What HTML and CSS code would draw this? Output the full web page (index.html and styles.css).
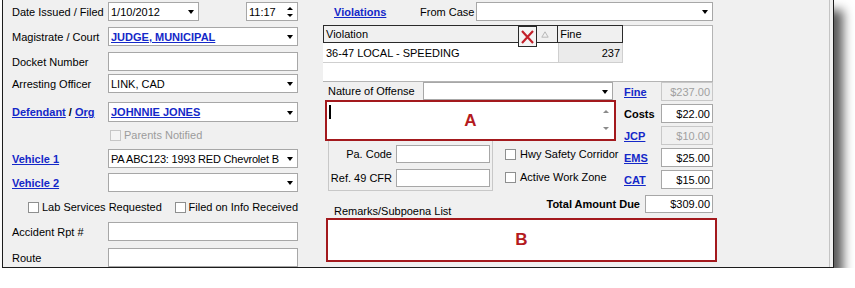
FILE: index.html
```html
<!DOCTYPE html>
<html lang="en">
<head>
    <meta charset="UTF-8">
    <meta name="viewport" content="width=device-width, initial-scale=1.0">
    <title>Citation Entry</title>
    <link rel="stylesheet" href="styles.css">
</head>
<body>

    <div class="window">

        <!-- left column: case / defendant fields -->
        <div class="left-col">
            <div class="row">
                <span class="lbl">Date Issued / Filed</span>
                <div class="field combo date-box"><span class="val">1/10/2012</span><span class="arrow"></span></div>
                <div class="field time-box"><span class="val">11:17</span><span class="spinner"><span class="up"></span><span class="down"></span></span></div>
            </div>
            <div class="row">
                <span class="lbl">Magistrate / Court</span>
                <div class="field combo"><span class="val link">JUDGE, MUNICIPAL</span><span class="arrow"></span></div>
            </div>
            <div class="row">
                <span class="lbl">Docket Number</span>
                <div class="field"></div>
            </div>
            <div class="row">
                <span class="lbl">Arresting Officer</span>
                <div class="field combo"><span class="val">LINK, CAD</span><span class="arrow"></span></div>
            </div>
            <div class="row tall">
                <span class="lbl"><span class="link">Defendant</span> <b>/</b> <span class="link">Org</span></span>
                <div class="field combo"><span class="val link">JOHNNIE JONES</span><span class="arrow"></span></div>
            </div>
            <div class="row check-row parents">
                <span class="cb disabled"></span><span class="muted">Parents Notified</span>
            </div>
            <div class="row">
                <span class="lbl"><span class="link">Vehicle 1</span></span>
                <div class="field combo"><span class="val tight">PA ABC123: 1993 RED Chevrolet B</span><span class="arrow"></span></div>
            </div>
            <div class="row">
                <span class="lbl"><span class="link">Vehicle 2</span></span>
                <div class="field combo"><span class="val"></span><span class="arrow"></span></div>
            </div>
            <div class="row check-row lab">
                <span class="check lab-check"><span class="cb"></span>Lab Services Requested</span>
                <span class="check"><span class="cb"></span>Filed on Info Received</span>
            </div>
            <div class="row">
                <span class="lbl">Accident Rpt #</span>
                <div class="field"></div>
            </div>
            <div class="row">
                <span class="lbl">Route</span>
                <div class="field"></div>
            </div>
        </div>

        <!-- middle column: violations and amounts -->
        <div class="mid-col">
            <div class="mid-head">
                <span class="viol-link"><span class="link">Violations</span></span>
                <span class="from-lbl">From Case</span>
                <div class="field combo from-box"><span class="val"></span><span class="arrow"></span></div>
            </div>

            <div class="vgrid">
                <div class="vrow vhead">
                    <div class="vc vc-name">
                        <span>Violation</span>
                        <span class="xbox">
                            <svg width="17" height="18" viewBox="0 0 17 18"><path d="M3 3 L14 15 M14 3 L3 15" stroke="#c3202a" stroke-width="2.2" fill="none"/></svg>
                        </span>
                        <svg class="sort" width="8" height="7" viewBox="0 0 8 7"><path d="M4 0.8 L7.2 6.2 L0.8 6.2 Z" stroke="#b8b8b8" fill="none"/></svg>
                    </div>
                    <div class="vc vc-fine">Fine</div>
                </div>
                <div class="vrow vdata">
                    <div class="vc vc-name">36-47 LOCAL - SPEEDING</div>
                    <div class="vc vc-fine">237</div>
                </div>
            </div>

            <div class="mid-body">
                <div class="main">
                    <div class="nature-row">
                        <span class="nature-lbl">Nature of Offense</span>
                        <div class="field combo nature-box"><span class="val"></span><span class="arrow"></span></div>
                    </div>

                    <div class="mark-box box-a">
                        <span class="caret"></span>
                        <span class="mark">A</span>
                        <span class="scroll"><span class="up"></span><span class="down"></span></span>
                    </div>

                    <div class="lower">
                        <div class="group">
                            <div class="code-row">
                                <span class="code-lbl">Pa. Code</span>
                                <div class="field code-box"></div>
                            </div>
                            <div class="code-row">
                                <span class="code-lbl">Ref. 49 CFR</span>
                                <div class="field code-box"></div>
                            </div>
                        </div>
                        <div class="zone-checks">
                            <span class="check"><span class="cb"></span>Hwy Safety Corridor</span>
                            <span class="check"><span class="cb"></span>Active Work Zone</span>
                        </div>
                    </div>
                </div>

                <div class="side">
                    <div class="amt-row"><span class="link">Fine</span><div class="field amt disabled">$237.00</div></div>
                    <div class="amt-row"><b>Costs</b><div class="field amt">$22.00</div></div>
                    <div class="amt-row"><span class="link">JCP</span><div class="field amt disabled">$10.00</div></div>
                    <div class="amt-row"><span class="link">EMS</span><div class="field amt">$25.00</div></div>
                    <div class="amt-row"><span class="link">CAT</span><div class="field amt">$15.00</div></div>
                </div>
            </div>

            <div class="mid-foot">
                <span class="remarks-lbl">Remarks/Subpoena List</span>
                <div class="total">
                    <b>Total Amount Due</b>
                    <div class="field total-box">$309.00</div>
                </div>
            </div>

            <div class="mark-box box-b">
                <span class="mark">B</span>
            </div>
        </div>

    </div>

</body>
</html>
```

FILE: styles.css
```css
body {
    margin: 0;
    background-color: #fff;
    font-family: "Liberation Sans", Arial, sans-serif;
    font-size: 11px;
    color: #000;
}

.window {
    display: flex;
    box-sizing: border-box;
    width: 832px;
    height: 268px;
    margin-left: 2px;
    padding-left: 9px;
    border: 1px solid #1c1c1c;
    border-top: none;
    background-color: #f0f0f0;
    overflow: hidden;
    box-shadow: inset -3px 0 0 #f0f0f0, inset -4px 0 0 #c4c4c4, 9px 10px 10px rgba(0, 0, 0, 0.65);
}

.link {
    color: #1428c8;
    font-weight: bold;
    text-decoration: underline;
}

.muted {
    color: #9c9c9c;
}

/* generic text box / combo */
.field {
    box-sizing: border-box;
    height: 19px;
    min-width: 0;
    border: 1px solid #a7a7a7;
    background-color: #fff;
    display: flex;
    align-items: center;
    white-space: nowrap;
    overflow: hidden;
}

.field .val {
    flex: 1;
    min-width: 0;
    padding-left: 2px;
    overflow: hidden;
}

.field .tight {
    letter-spacing: -0.2px;
}

.arrow {
    width: 15px;
    height: 100%;
    flex-shrink: 0;
    display: flex;
    align-items: center;
    justify-content: center;
}

.arrow::after {
    content: "";
    border-left: 3.5px solid transparent;
    border-right: 3.5px solid transparent;
    border-top: 4px solid #000;
    margin-top: 1px;
}

.up,
.down {
    display: block;
    width: 0;
    height: 0;
    border-left: 3px solid transparent;
    border-right: 3px solid transparent;
}

.up {
    border-bottom: 3px solid #000;
}

.down {
    border-top: 3px solid #000;
}

.cb {
    display: inline-block;
    flex-shrink: 0;
    box-sizing: border-box;
    width: 11px;
    height: 11px;
    border: 1px solid #8e8f8f;
    background-color: #fff;
    margin-right: 3px;
}

.cb.disabled {
    border-color: #c6c6c6;
    background-color: #f4f4f4;
}

.check {
    display: flex;
    align-items: center;
    white-space: nowrap;
}

/* left column */
.left-col {
    width: 286px;
    padding-top: 2px;
    display: grid;
    grid-template-columns: 286px;
    grid-template-rows: 25px 25px 22px 28px 27px 20px 24px 28px 21px 26px 20px;
    align-items: start;
}

.row {
    display: flex;
    align-items: center;
    height: 19px;
    min-width: 0;
}

.row .field {
    flex: 1;
}

.row.tall,
.row.tall .field {
    height: 20px;
}

.lbl {
    width: 96px;
    flex-shrink: 0;
    white-space: nowrap;
}

.row .date-box {
    flex: none;
    width: 91px;
}

.row .time-box {
    flex: none;
    width: 52px;
    margin-left: auto;
}

.spinner {
    width: 14px;
    display: flex;
    flex-direction: column;
    align-items: center;
    gap: 4px;
}

.check-row {
    height: 12px;
}

.parents {
    padding-left: 98px;
}

.lab {
    padding-left: 16px;
}

.lab-check {
    width: 149px;
}

/* middle column */
.mid-col {
    width: 395px;
    margin-left: 25px;
}

.mid-head {
    display: flex;
    align-items: center;
    height: 19px;
    margin-top: 2px;
}

.viol-link {
    width: 86px;
    padding-left: 11px;
}

.from-lbl {
    width: 56px;
}

.from-box {
    width: 237px;
}

.vgrid {
    box-sizing: border-box;
    width: 390px;
    height: 57px;
    margin-top: 4px;
    border: 1px solid #b4b4b4;
    border-left: none;
    background-color: #fff;
}

.vrow {
    display: flex;
    width: 300px;
}

.vc {
    box-sizing: border-box;
    display: flex;
    align-items: center;
    padding: 0 2px;
}

.vc-name {
    width: 235px;
}

.vc-fine {
    width: 65px;
}

.vhead {
    box-sizing: border-box;
    height: 18px;
    margin-top: -1px;
    border: 1px solid #2a2a2a;
    background-color: #f0f0f0;
}

.vhead .vc-fine {
    border-left: 1px solid #2a2a2a;
}

.vhead .vc-name {
    width: 234px;
}

.xbox {
    position: relative;
    z-index: 1;
    box-sizing: border-box;
    width: 19px;
    height: 21px;
    margin-left: auto;
    align-self: flex-start;
    border: 1px solid #2a2a2a;
    background-color: #f4f4f4;
    display: flex;
    align-items: center;
    justify-content: center;
}

.sort {
    margin: 0 6px 0 4px;
}

.vdata {
    box-sizing: border-box;
    height: 20px;
    border-bottom: 1px solid #cfcfcf;
}

.vdata .vc-name {
    padding-left: 3px;
}

.vdata .vc-fine {
    justify-content: flex-end;
    border-left: 1px solid #cfcfcf;
    border-right: 1px solid #cfcfcf;
    background-color: #ebebeb;
}

.mid-body {
    display: flex;
}

.main {
    width: 295px;
    flex-shrink: 0;
}

.nature-row {
    display: flex;
    align-items: center;
    height: 18px;
}

.nature-lbl {
    width: 95px;
    padding-left: 5px;
}

.nature-box {
    width: 190px;
    height: 18px;
}

.mark-box {
    box-sizing: border-box;
    border: 2px solid #a3191d;
    background-color: #fff;
}

.mark {
    color: #b41a20;
    font-size: 17px;
    font-weight: bold;
    text-align: center;
}

.box-a {
    width: 291px;
    height: 41px;
    margin-left: 2px;
    display: grid;
    grid-template-columns: 20px 1fr 20px;
    align-items: center;
}

.caret {
    width: 2px;
    height: 14px;
    margin-left: 2px;
    align-self: start;
    margin-top: 3px;
    background-color: #000;
}

.scroll {
    height: 100%;
    display: flex;
    flex-direction: column;
    align-items: center;
    justify-content: space-between;
    padding: 8px 0 9px 4px;
    box-sizing: border-box;
}

.scroll .up {
    border-bottom-color: #8a8a8a;
}

.scroll .down {
    border-top-color: #8a8a8a;
}

.lower {
    display: flex;
}

.group {
    box-sizing: border-box;
    width: 165px;
    height: 50px;
    margin-left: 5px;
    padding-top: 4px;
    border: 1px solid #c8c8c8;
    border-top: none;
    display: flex;
    flex-direction: column;
    gap: 6px;
    flex-shrink: 0;
}

.code-row {
    display: flex;
    align-items: center;
    height: 18px;
}

.code-lbl {
    width: 63px;
    margin-right: 4px;
    text-align: right;
    white-space: nowrap;
}

.code-box {
    width: 94px;
    height: 18px;
}

.zone-checks {
    margin-left: 12px;
    padding-top: 6px;
    display: flex;
    flex-direction: column;
    gap: 9px;
}

.zone-checks .check {
    height: 14px;
}

.zone-checks .cb {
    margin-right: 4px;
}

.side {
    width: 89px;
    margin-left: 6px;
    display: grid;
    grid-template-rows: repeat(5, 22px);
    align-items: start;
}

.amt-row {
    display: flex;
    align-items: center;
    justify-content: space-between;
    height: 19px;
}

.amt {
    width: 52px;
    justify-content: flex-end;
    padding-right: 2px;
}

.amt.disabled {
    color: #a0a0a0;
    border-color: #c8c8c8;
    background-color: #f0f0f0;
}

.mid-foot {
    display: flex;
    justify-content: space-between;
    height: 26px;
}

.remarks-lbl {
    align-self: flex-end;
    padding-left: 11px;
    line-height: 13px;
}

.total {
    display: flex;
    align-items: center;
    gap: 5px;
    height: 18px;
    margin-top: 3px;
    margin-right: 5px;
}

.total-box {
    width: 68px;
    height: 18px;
    justify-content: flex-end;
    padding-right: 2px;
}

.box-b {
    width: 391px;
    height: 44px;
    margin-left: 3px;
    display: flex;
    align-items: center;
    justify-content: center;
}
```
